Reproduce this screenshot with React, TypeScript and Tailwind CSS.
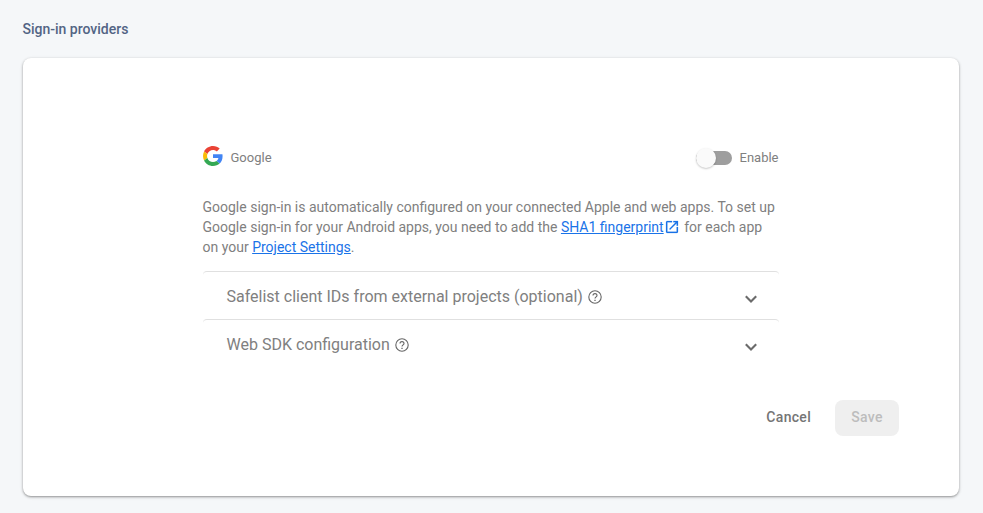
import React from "react";

function GoogleLogo() {
  return (
    <svg width="20" height="20" viewBox="0 0 48 48" className="-mt-1 shrink-0">
      <path fill="#EA4335" d="M24 9.5c3.54 0 6.71 1.22 9.21 3.6l6.85-6.85C35.9 2.38 30.47 0 24 0 14.62 0 6.51 5.38 2.56 13.22l7.98 6.19C12.43 13.72 17.74 9.5 24 9.5z" />
      <path fill="#4285F4" d="M46.98 24.55c0-1.57-.15-3.09-.38-4.55H24v9.02h12.94c-.58 2.96-2.26 5.48-4.78 7.18l7.73 6c4.51-4.18 7.09-10.36 7.09-17.65z" />
      <path fill="#FBBC05" d="M10.53 28.59c-.48-1.45-.76-2.99-.76-4.59s.27-3.14.76-4.59l-7.98-6.19C.92 16.46 0 20.12 0 24c0 3.88.92 7.54 2.56 10.78l7.97-6.19z" />
      <path fill="#34A853" d="M24 48c6.48 0 11.93-2.13 15.89-5.81l-7.73-6c-2.15 1.45-4.92 2.3-8.16 2.3-6.26 0-11.57-4.22-13.47-9.91l-7.98 6.19C6.51 42.62 14.62 48 24 48z" />
    </svg>
  );
}

function HelpIcon() {
  return (
    <svg width="16" height="16" viewBox="0 0 16 16" fill="none" stroke="#666666" strokeWidth="1.1" className="shrink-0">
      <circle cx="8" cy="8" r="6.2" />
      <path d="M6 6.6a2 2 0 1 1 4 0c0 1.3-2 1.4-2 3" />
      <path d="M8 10.7v1.3" strokeWidth="1.3" />
    </svg>
  );
}

function Panel({ title }: { title: string }) {
  return (
    <button className="flex h-12 w-full items-center rounded-[4px] border-t border-[#e0e0e0] pt-[2px] pr-4 pl-6 text-left text-[16px] text-[#808080]">
      <span className="-ml-[0.5px] mr-1 whitespace-nowrap">{title}</span>
      <HelpIcon />
      <svg width="24" height="24" viewBox="0 0 24 24" fill="none" stroke="#6b6b6b" strokeWidth="2.1" className="mt-[4px] ml-auto">
        <path d="M6.8 9.3L12 14.5l5.2-5.2" />
      </svg>
    </button>
  );
}

export default function App() {
  return (
    <main className="h-[513px] w-[983px] overflow-hidden bg-[#f5f7f9] px-[23px] pt-5 font-[Roboto,sans-serif] text-[#808080]">
      <h1 className="-ml-[0.5px] h-[18px] text-[14px] leading-[18px] font-medium text-[#526484]">Sign-in providers</h1>
      <section className="mt-5 h-[438px] w-[936px] rounded-lg bg-white pt-[88px] pr-[60px] pl-[180px] shadow-[0_1px_2px_rgba(0,0,0,0.3),0_1px_3px_1px_rgba(0,0,0,0.1)]">
        <div className="w-[576px]">
          <div className="flex h-6 items-center text-[13px]">
            <GoogleLogo />
            <span className="ml-[7.5px]">Google</span>
            <div className="mr-[7.5px] ml-auto flex h-5 w-9 items-center">
              <div className="flex h-[14px] w-9 items-center rounded-full bg-[#9e9e9e]">
                <div className="h-5 w-5 shrink-0 rounded-full bg-[#fafafa] shadow-[0_1px_2px_rgba(0,0,0,0.22)]" />
              </div>
            </div>
            <span className="mr-[0.5px]">Enable</span>
          </div>
          <p className="mt-[27px] -ml-[0.5px] text-[14px] leading-5 whitespace-nowrap">
            Google sign-in is automatically configured on your connected Apple and web apps. To set up<br />
            Google sign-in for your Android apps, you need to add the{" "}
            <a className="text-[#1a73e8]"><span className="underline">SHA1 fingerprint</span>
              <svg width="16" height="16" viewBox="0 0 24 24" fill="currentColor" stroke="currentColor" strokeWidth="0.3" className="mr-[0.5px] ml-[0.5px] inline align-[-3px]">
                <path d="M19 19H5V5h7V3H5a2 2 0 0 0-2 2v14a2 2 0 0 0 2 2h14c1.1 0 2-.9 2-2v-7h-2v7zM14 3v2h3.59l-9.83 9.83 1.41 1.41L19 6.41V10h2V3h-7z" />
              </svg></a>{" "}for each app<br />
            on your <a className="text-[#1a73e8] underline">Project Settings</a>.
          </p>
          <div className="mt-[14px]">
            <Panel title="Safelist client IDs from external projects (optional)" />
            <Panel title="Web SDK configuration" />
          </div>
        </div>
        <div className="mt-[33px] flex justify-end gap-2 text-[14px] font-medium tracking-[0.3px]">
          <button className="h-9 px-4 pb-[2px] text-[#757575]">Cancel</button>
          <button className="h-9 w-16 rounded-lg bg-[#efefef] pb-[2px] text-[#bdbdbd]">Save</button>
        </div>
      </section>
    </main>
  );
}
